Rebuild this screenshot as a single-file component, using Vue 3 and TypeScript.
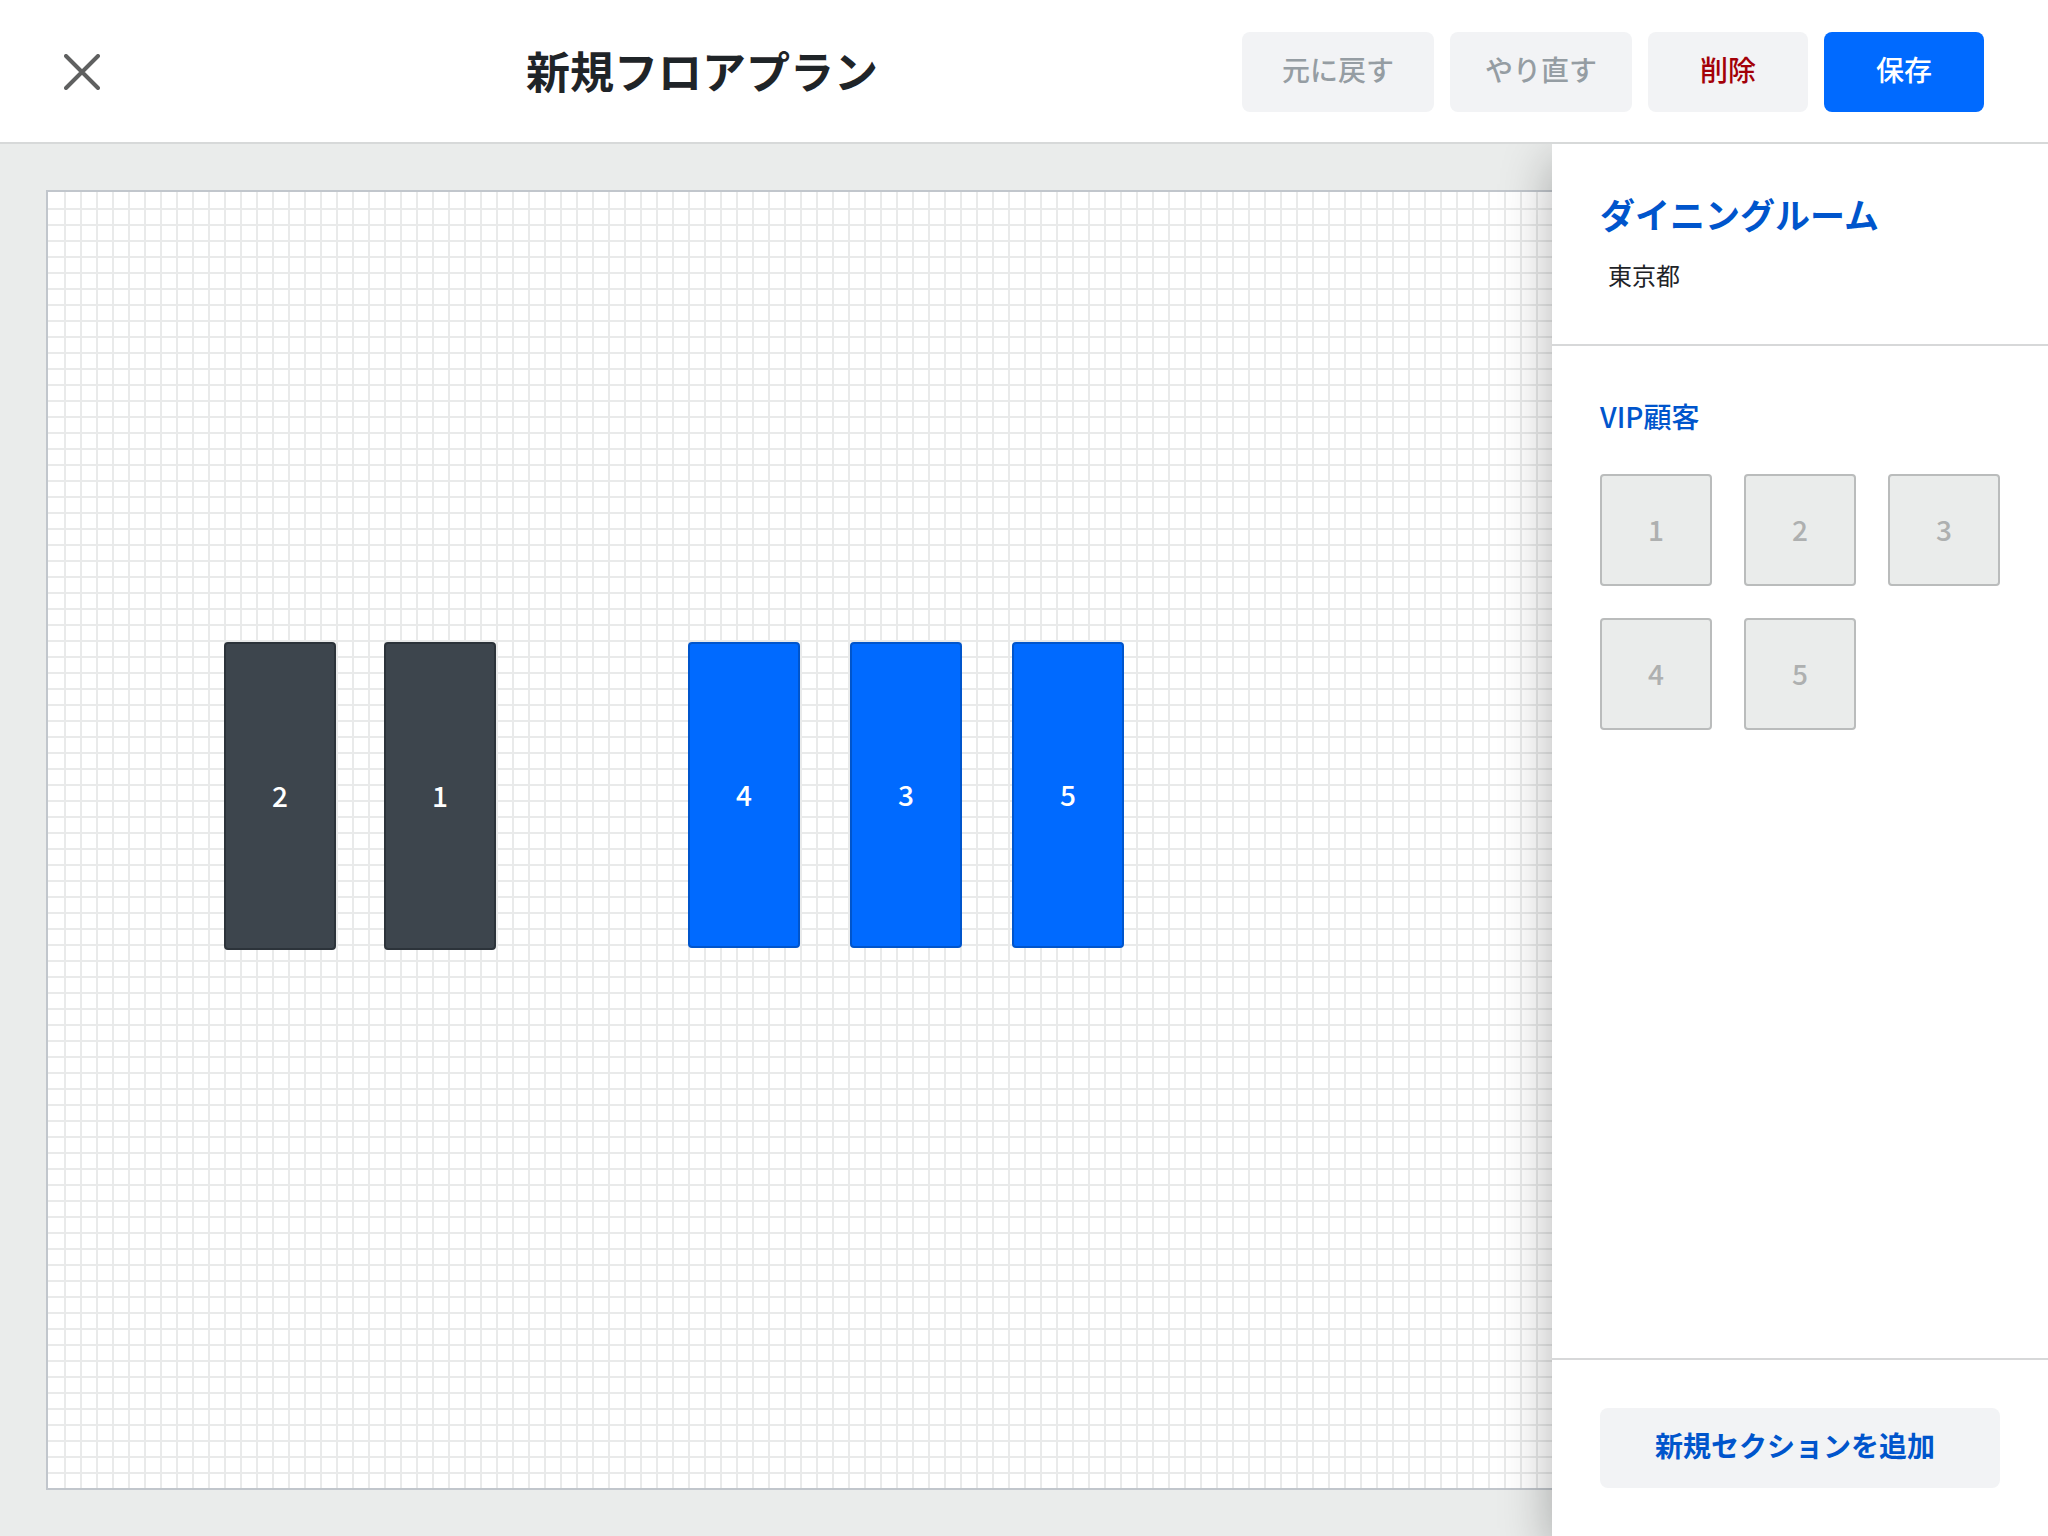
<script setup lang="ts">
interface FloorTable {
  id: number
  x: number
  y: number
  height: number
  tone: 'dark' | 'blue'
}

const tables: FloorTable[] = [
  { id: 2, x: 176, y: 450, height: 308, tone: 'dark' },
  { id: 1, x: 336, y: 450, height: 308, tone: 'dark' },
  { id: 4, x: 640, y: 450, height: 306, tone: 'blue' },
  { id: 3, x: 802, y: 450, height: 306, tone: 'blue' },
  { id: 5, x: 964, y: 450, height: 306, tone: 'blue' },
]

const sectionTables: number[] = [1, 2, 3, 4, 5]
</script>

<template>
  <div class="editor">
    <header class="header">
      <button class="close" type="button" aria-label="閉じる">
        <svg viewBox="0 0 36 36" width="36" height="36" aria-hidden="true">
          <path d="M2 2 34 34M34 2 2 34" fill="none" stroke="#5f6060" stroke-width="4" stroke-linecap="round" />
        </svg>
      </button>
      <h1 class="title">新規フロアプラン</h1>
      <div class="actions">
        <button class="btn muted" type="button">元に戻す</button>
        <button class="btn muted redo" type="button">やり直す</button>
        <button class="btn danger" type="button">削除</button>
        <button class="btn primary" type="button">保存</button>
      </div>
    </header>

    <div class="body">
      <main class="stage">
        <div class="canvas">
          <button
            v-for="t in tables"
            :key="t.id"
            type="button"
            class="table"
            :class="t.tone"
            :style="{ left: t.x + 'px', top: t.y + 'px', height: t.height + 'px' }"
          >
            {{ t.id }}
          </button>
        </div>
      </main>

      <aside class="panel">
        <div class="room">
          <h2 class="room-name">ダイニングルーム</h2>
          <p class="room-place">東京都</p>
        </div>
        <section class="section">
          <h3 class="section-name">VIP顧客</h3>
          <div class="tiles">
            <button v-for="n in sectionTables" :key="n" class="tile" type="button">{{ n }}</button>
          </div>
        </section>
        <footer class="panel-footer">
          <button class="btn add" type="button">新規セクションを追加</button>
        </footer>
      </aside>
    </div>
  </div>
</template>

<style>
body {
  margin: 0;
  background: #fff;
}
</style>

<style scoped>
.editor {
  display: flex;
  flex-direction: column;
  min-height: 100vh;
  font-family: "Noto Sans CJK JP", "Noto Sans", sans-serif;
  color: #1f2428;
}

button {
  font: inherit;
  margin: 0;
  cursor: pointer;
}

h1,
h2,
h3,
p {
  margin: 0;
}

.header {
  position: relative;
  z-index: 2;
  display: flex;
  align-items: center;
  padding: 32px 64px 30px;
  border-bottom: 2px solid #d7d9d9;
  background: #fff;
}

.close {
  display: flex;
  padding: 0;
  border: 0;
  background: none;
}

.title {
  flex: 1;
  padding: 0 0 4px 62px;
  text-align: center;
  font-size: 44px;
  line-height: 64px;
  font-weight: 700;
}

.actions {
  display: flex;
  gap: 16px;
}

.btn {
  min-width: 160px;
  height: 80px;
  padding: 0 40px 6px;
  border: 0;
  border-radius: 8px;
  background: #f2f3f5;
  font-size: 28px;
  line-height: 40px;
  font-weight: 500;
  white-space: nowrap;
}

.muted {
  color: #959da3;
}

.redo {
  padding-left: 35px;
  padding-right: 35px;
}

.danger {
  color: #a30008;
}

.primary {
  background: #006aff;
  color: #fff;
}

.body {
  flex: 1;
  display: flex;
}

.stage {
  flex: 1;
  min-width: 0;
  display: flex;
  padding: 46px 0 46px 46px;
  background: #eaeceb;
}

.canvas {
  position: relative;
  flex: 1;
  border: 2px solid #c1c6cc;
  border-right: 0;
  background:
    repeating-linear-gradient(90deg, #e9eaea 0 2px, transparent 2px 16px) 16px 0 / 100% 100% no-repeat,
    repeating-linear-gradient(180deg, #e9eaea 0 2px, transparent 2px 16px) 0 16px / 100% 100% no-repeat,
    #fff;
}

.table {
  position: absolute;
  width: 112px;
  padding: 0 0 2px;
  border-radius: 4px;
  font-size: 28px;
  line-height: 40px;
  font-weight: 500;
  color: #fff;
}

.dark {
  border: 2px solid #2c333a;
  background: #3d454d;
}

.blue {
  border: 2px solid #0055cc;
  background: #006aff;
}

.panel {
  position: relative;
  z-index: 1;
  display: flex;
  flex-direction: column;
  width: 496px;
  background: #fff;
  box-shadow: 0 16px 48px rgba(0, 0, 0, 0.3);
}

.room {
  padding: 46px 48px 52px;
  border-bottom: 2px solid #d7d8d9;
}

.room-name {
  font-size: 35px;
  line-height: 48px;
  font-weight: 700;
  color: #0055cc;
}

.room-place {
  padding: 20px 8px 0;
  font-size: 24px;
  line-height: 34px;
  font-weight: 400;
}

.section {
  flex: 1;
  padding: 46px 48px;
}

.section-name {
  font-size: 28px;
  line-height: 48px;
  font-weight: 500;
  color: #0055cc;
}

.tiles {
  display: flex;
  flex-wrap: wrap;
  gap: 32px;
  margin-top: 34px;
}

.tile {
  width: 112px;
  height: 112px;
  padding: 0 0 2px;
  border: 2px solid #babcbc;
  border-radius: 4px;
  background: #eaeceb;
  font-size: 28px;
  line-height: 40px;
  font-weight: 500;
  color: #aeb0b0;
}

.panel-footer {
  padding: 48px;
  border-top: 2px solid #d7d8d9;
}

.add {
  width: 100%;
  padding-right: 50px;
  font-weight: 700;
  color: #0055cc;
}
</style>
